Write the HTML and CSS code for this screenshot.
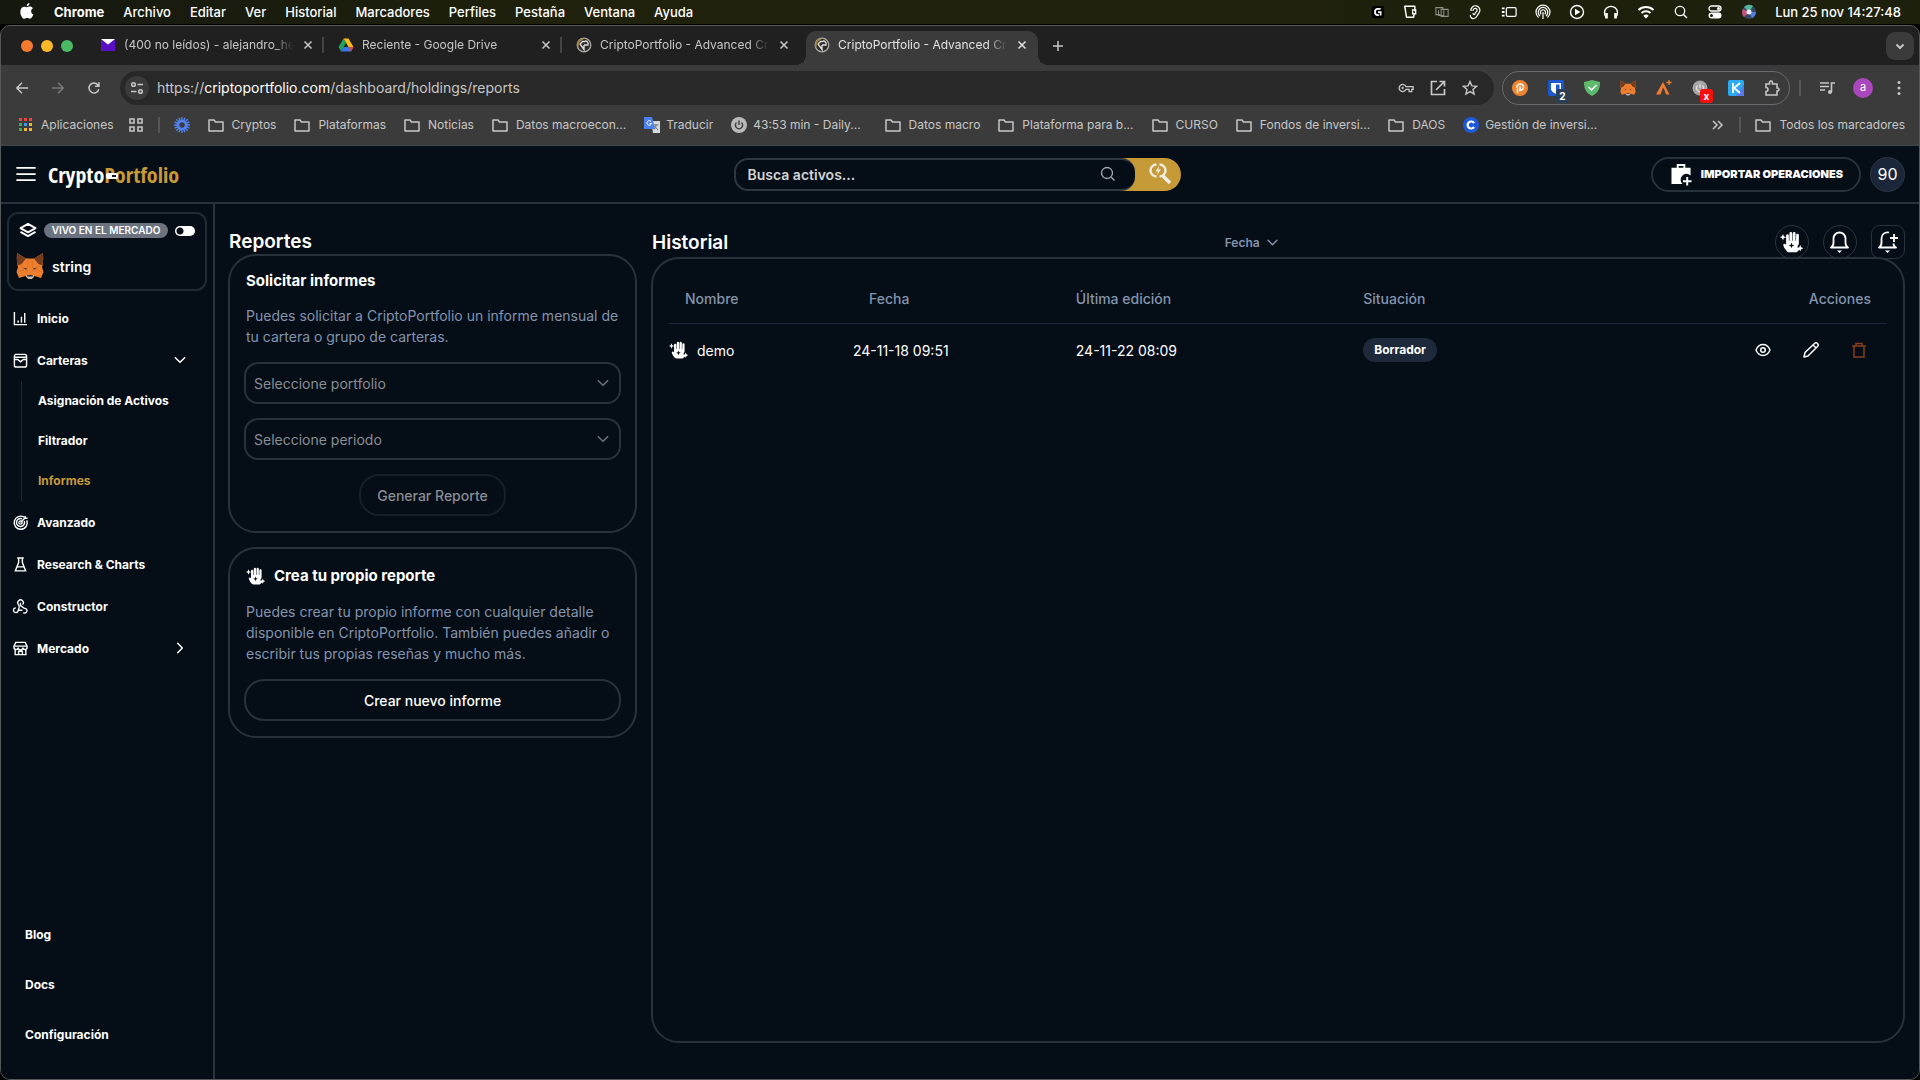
FILE: index.html
```html
<!DOCTYPE html>
<html lang="es">
<head>
<meta charset="utf-8">
<meta name="viewport" content="width=device-width, initial-scale=1">
<title>CriptoPortfolio - Advanced Crypto Dashboard</title>
<link rel="stylesheet" href="styles.css">
</head>
<body>
<svg class="defs" aria-hidden="true">
  <symbol id="folder" viewBox="0 0 16 16"><path d="M1 3h5l1.500 2H15v9H1z" fill="none" stroke="currentColor" stroke-width="1.500" stroke-linejoin="round"/></symbol>
  <symbol id="cross" viewBox="0 0 10 10"><path d="M1.500 1.500l7 7M8.500 1.500l-7 7" fill="none" stroke="currentColor" stroke-width="1.500"/></symbol>
  <symbol id="chev" viewBox="0 0 12 12"><path d="M2 4l4 4 4-4" fill="none" stroke="currentColor" stroke-width="1.300" stroke-linecap="round" stroke-linejoin="round"/></symbol>
  <symbol id="coin" viewBox="0 0 16 16"><circle cx="8" cy="8" r="6.800" fill="#2b2b2b" stroke="#aaa9a3" stroke-width="1.300"/><path d="M2 10A6.500 6.500 0 0 1 7 2" fill="none" stroke="#a9803a" stroke-width="1.500"/><path d="M9 4.500H6.500L4 7l4 5.500V8M8 8h4a3 3 0 0 0-3-4" fill="none" stroke="#deddd8" stroke-width="1.400"/></symbol>
  <symbol id="fox" viewBox="0 0 28 26"><path d="M1 0l9 5.500h8L27 0v11l-1 3 1.500 5-2.500 6-6.500-2-1.500 2h-6l-1.500-2L3 25l-2.500-6L2 14l-1-3z" fill="#ed7f2e"/><path d="M1 0l9 5.500L5.500 11 1.500 12.500 0.500 5zM27 0l-9 5.500 4.500 5.500 4 1.500 1-7.500z" fill="#763c1e"/><path d="M9.500 22.500h9l-2.500 3.500h-4z" fill="#cbbdb1"/><path d="M11.500 22h5l.5 1.500h-6zM7 14.500l4 1-1 1.200zM21 14.500l-4 1 1 1.200z" fill="#2b3040"/><path d="M5 12l3 5-6 2M23 12l-3 5 6 2M12 7l-1 12M16 7l1 12" fill="none" stroke="#d96d22" stroke-width=".7"/></symbol>
  <symbol id="hand" viewBox="0 0 20 18"><path d="M5.300 3.500a1.200 1.200 0 0 1 2.400 0V8h.5V1.500a1.200 1.200 0 0 1 2.400 0V8h.5V1.500a1.200 1.200 0 0 1 2.400 0V8h.5V3a1.200 1.200 0 0 1 2.400 0V10.500l-1.400 3 2.500 1.500L14.500 18H8c-2 0-4.500-4-5-5.800-.5-1.800 1-2.400 2.300-.9zM2.600 2l.8 2 2 .8-2 .8-.8 2-.8-2-2-.8 2-.8zM17.600 11.500l.8 2.100 2.100.8-2.100.8-.8 2.100-.8-2.100-2.100-.8 2.100-.8z" fill="currentColor"/><path d="M10 9.500l.7 1.800 1.800.7-1.800.7-.7 1.800-.7-1.800L7.500 12l1.800-.7z" fill="#050d17"/></symbol>
</svg>

<header class="menubar">
  <svg class="apple" viewBox="0 0 14 17"><path d="M9.500 0c.1 1.500-1.200 3.200-2.800 3.200C6.500 1.700 8 .2 9.500 0zM7 4.300c.8 0 1.500-.7 2.900-.7 1.200 0 2.300.6 3 1.600-2.600 1.500-2.200 5.100.5 6.200-.6 1.600-2 4.300-3.600 4.300-1 0-1.400-.7-2.700-.7s-1.700.7-2.700.7C2.400 15.700.3 12 .3 8.900c0-3.300 2-5.200 4-5.200 1.200 0 2 .6 2.700.6z" fill="#fff"/></svg>
  <nav class="menus" aria-label="Menú de la aplicación"><b>Chrome</b><span>Archivo</span><span>Editar</span><span>Ver</span><span>Historial</span><span>Marcadores</span><span>Perfiles</span><span>Pestaña</span><span>Ventana</span><span>Ayuda</span></nav>
  <div class="tray">
    <svg class="slim" viewBox="0 0 16 16"><rect x="1" y="1" width="14" height="14" rx="3" fill="#000"/><path d="M11 4.500H8a3.300 3.300 0 0 0 0 7h1M8 8h3v4" fill="none" stroke="#fff" stroke-width="2"/></svg>
    <svg class="slim" viewBox="0 0 16 16"><path d="M13.500 7V1.500H2l2 12.500h8l.8-3.500" fill="none" stroke="#fff" stroke-width="1.700" stroke-linejoin="round"/><path d="M11 5.500h3.500v4.500H11z" fill="none" stroke="#fff" stroke-width="1.500"/></svg>
    <svg class="slim dim" viewBox="0 0 16 16"><path d="M6 11H1V3h8v2M7 5h8v8H7zM4 6v6h6V6" fill="none" stroke="currentColor" stroke-width="1.200"/></svg>
    <svg viewBox="0 0 16 16"><path d="M4 7a4.500 4.500 0 1 1 8 2c-2 2-2 5-5 5.500C4 15 3 12 3.500 11M6 7c0-4 5-3 4 0-.4 1-2 1-2 2.500S6 11 6 9" fill="none" stroke="#fff" stroke-width="1.200"/></svg>
    <svg viewBox="0 0 18 16"><rect x="6" y="3" width="11" height="10" rx="1.500" fill="none" stroke="#fff" stroke-width="1.400"/><path d="M1 4h3M1 8h3M1 12h3" stroke="#fff" stroke-width="2"/></svg>
    <svg viewBox="0 0 16 16"><path d="M3.500 13.500a7 7 0 1 1 9 0M5 12a4.800 4.800 0 1 1 6 0M6.300 10.300a2.600 2.600 0 1 1 3.400 0M8 8v7" fill="none" stroke="#fff" stroke-width="1.200"/></svg>
    <svg viewBox="0 0 16 16"><circle cx="8" cy="8" r="6.500" fill="none" stroke="#fff" stroke-width="1.400"/><path d="M6 4.800L11.300 8 6 11.200z" fill="#fff"/></svg>
    <svg viewBox="0 0 16 16"><path d="M3 13a6.500 6.500 0 1 1 10 0" fill="none" stroke="#fff" stroke-width="1.400"/><path d="M3.500 9v5.500M12.500 9v5.500" stroke="#fff" stroke-width="2.600"/></svg>
    <svg class="wide" viewBox="0 0 18 16"><path d="M1.500 6a11 11 0 0 1 15 0M4.500 9a6.700 6.700 0 0 1 9 0" fill="none" stroke="#fff" stroke-width="2"/><path d="M9 14.500L6.300 11.700a4 4 0 0 1 5.400 0z" fill="#fff"/></svg>
    <svg viewBox="0 0 16 16"><circle cx="7" cy="7" r="4.700" fill="none" stroke="#fff" stroke-width="1.300"/><path d="M10.500 10.500L14 14" stroke="#fff" stroke-width="1.500"/></svg>
    <svg viewBox="0 0 16 16"><rect x="2" y="2" width="12" height="5" rx="2.500" fill="none" stroke="#fff" stroke-width="1.300"/><rect x="1.500" y="8.500" width="13" height="6" rx="3" fill="#fff"/><circle cx="11.500" cy="4.500" r="1.500" fill="#fff"/><circle cx="4.500" cy="11.500" r="1.500" fill="#1d1f0c"/></svg>
    <svg viewBox="0 0 16 16"><circle cx="8" cy="8" r="7" fill="#37475e"/><path d="M8 8L3 3a7 7 0 0 1 9-1z" fill="#52b6a0"/><path d="M8 8L3 13a7 7 0 0 1-1-8z" fill="#c8557b"/><path d="M8 8l3 6a7 7 0 0 0 4-6z" fill="#4f7fe0"/><circle cx="8" cy="8" r="2.500" fill="#e8ecf5"/></svg>
    <time>Lun 25 nov 14:27:48</time>
  </div>
</header>

<div class="window">
  <div class="tabstrip">
    <div class="lights"><i class="l1"></i><i class="l2"></i><i class="l3"></i></div>
    <div class="tab"><svg viewBox="0 0 16 16"><path d="M1 2h14v12H1z" fill="#5b0fc4"/><path d="M1 2h14L8 7.500z" fill="#fff"/></svg><span>(400 no leídos) - alejandro_he</span><button aria-label="Cerrar"><svg><use href="#cross"/></svg></button></div>
    <div class="tab"><svg viewBox="0 0 16 16"><path d="M5.500 1.500L0.500 10 3 14.500 8 6z" fill="#23a05a"/><path d="M5.500 1.500h5L15.500 10h-5z" fill="#f9bd1c"/><path d="M3 14.500h10l2.500-4.500h-10z" fill="#3b74e8"/><path d="M11 10h4.500L13 14.500z" fill="#e2422f"/></svg><span>Reciente - Google Drive</span><button aria-label="Cerrar"><svg><use href="#cross"/></svg></button></div>
    <div class="tab last"><svg><use href="#coin"/></svg><span>CriptoPortfolio - Advanced Cr</span><button aria-label="Cerrar"><svg><use href="#cross"/></svg></button></div>
    <div class="tab active"><svg><use href="#coin"/></svg><span>CriptoPortfolio - Advanced Cr</span><button aria-label="Cerrar"><svg><use href="#cross"/></svg></button></div>
    <button class="newtab" aria-label="Nueva pestaña"><svg viewBox="0 0 12 12"><path d="M6 1v10M1 6h10" stroke="currentColor" stroke-width="1.500"/></svg></button>
    <button class="tabsearch" aria-label="Buscar pestañas"><svg viewBox="0 0 12 12"><path d="M2.500 4.500L6 8l3.500-3.500" fill="none" stroke="currentColor" stroke-width="2"/></svg></button>
  </div>

  <div class="toolbar">
    <button aria-label="Atrás"><svg viewBox="0 0 16 16"><path d="M15 8H2M8 2L2 8l6 6" fill="none" stroke="currentColor" stroke-width="1.700"/></svg></button>
    <button class="off" aria-label="Adelante"><svg viewBox="0 0 16 16"><path d="M1 8h13M8 2l6 6-6 6" fill="none" stroke="currentColor" stroke-width="1.700"/></svg></button>
    <button aria-label="Recargar"><svg viewBox="0 0 16 16"><path d="M13.500 9.500A5.700 5.700 0 1 1 12.500 4.500L13.500 6M13.700 1.500V6H9.200" fill="none" stroke="currentColor" stroke-width="1.700"/></svg></button>
    <div class="omnibox">
      <span class="site"><svg viewBox="0 0 16 16"><path d="M8.500 4.500H14M2 11.500h5.500" stroke="currentColor" stroke-width="1.700"/><circle cx="4.500" cy="4.500" r="1.800" fill="none" stroke="currentColor" stroke-width="1.500"/><circle cx="11.500" cy="11.500" r="1.800" fill="none" stroke="currentColor" stroke-width="1.500"/></svg></span>
      <div class="url">https://<b>criptoportfolio.com</b>/dashboard/holdings/reports</div>
      <svg viewBox="0 0 18 16"><path d="M9 6.500h8v3h-1.500V12h-3V9.500H9A4 4 0 1 1 9 6.500z" fill="none" stroke="currentColor" stroke-width="1.500"/><circle cx="5.200" cy="8" r="1.300" fill="currentColor"/></svg>
      <svg viewBox="0 0 16 16"><path d="M7 1.500H1.500v13h13V9M9.500 1.500h5v5M14.500 1.500L6 10" fill="none" stroke="currentColor" stroke-width="1.700"/></svg>
      <svg viewBox="0 0 16 16"><path d="M8 1.500l1.900 4.400 4.700.4-3.600 3.100 1.100 4.700L8 11.600l-4.100 2.500L5 9.400 1.400 6.300l4.700-.4z" fill="none" stroke="currentColor" stroke-width="1.400"/></svg>
    </div>
    <div class="extensions">
      <svg viewBox="0 0 16 16"><circle cx="8" cy="8" r="8" fill="#f08531"/><path d="M5.500 13V8.500M5 8a3.300 3.300 0 1 1 3 2.500L8 6" fill="none" stroke="#fff" stroke-width="1.500"/></svg>
      <span class="ext"><svg viewBox="0 0 16 16"><rect width="16" height="16" rx="2" fill="#1b57d0"/><path d="M3 3h10v6c0 2-3 4-5 5-2-1-5-3-5-5z" fill="#fff"/><path d="M8 4.500h3.500V9c0 1-2 2.500-3.500 3.300z" fill="#1b57d0"/></svg><em class="badge-count">2</em></span>
      <svg viewBox="0 0 16 16"><path d="M8 0l8 2c0 7-2 11-8 14C2 13 0 9 0 2z" fill="#5dba6c"/><path d="M4.500 7L7.500 10l5-5" fill="none" stroke="#fff" stroke-width="1.500"/></svg>
      <svg><use href="#fox"/></svg>
      <svg viewBox="0 0 16 16"><path d="M7 2l6.500 12.500H10L8.500 10 7 7.500 4.500 14.500H0z" fill="#ef7d2d"/><path d="M13 0v5M10.500 2.500h5" stroke="#ef7d2d" stroke-width="1.300"/></svg>
      <span class="ext"><svg viewBox="0 0 16 16"><circle cx="8" cy="8" r="7.500" fill="#a5a5a5"/><path d="M5.500 5.500a3.600 3.600 0 1 0 5 0M8 3.500V8" fill="none" stroke="#ddd" stroke-width="1.300"/></svg><em class="badge-count red">x</em></span>
      <svg viewBox="0 0 16 16"><rect width="16" height="16" rx="2" fill="#2eaaf0"/><path d="M8 16h8V4z" fill="#5578ee"/><path d="M5 3v10M12 3L6 8l6 5" fill="none" stroke="#fff" stroke-width="1.800"/></svg>
      <svg viewBox="0 0 16 16"><path d="M2 4h3.500V2.500a1.500 1.500 0 0 1 3 0V4H13v4h.5a1.500 1.500 0 0 1 0 3H13v4H2v-3.500a2 2 0 0 0 0-4z" fill="none" stroke="currentColor" stroke-width="1.600"/></svg>
    </div>
    <i class="vsep"></i>
    <svg class="media" viewBox="0 0 16 16"><path d="M1 3h9M1 6.500h9M1 10h5M12.500 12V3H16" fill="none" stroke="currentColor" stroke-width="1.600"/><circle cx="11" cy="12" r="2" fill="currentColor"/></svg>
    <span class="profile">a</span>
    <svg class="dots" viewBox="0 0 16 16"><circle cx="8" cy="2.500" r="1.500" fill="currentColor"/><circle cx="8" cy="8" r="1.500" fill="currentColor"/><circle cx="8" cy="13.500" r="1.500" fill="currentColor"/></svg>
  </div>

  <nav class="bookmarks" aria-label="Marcadores">
    <div class="group">
      <a href="#"><svg viewBox="0 0 16 16"><path d="M2 1h3v3H2zM7 1h3v3H7zM12 1h3v3h-3z" fill="#f0453a"/><path d="M2 6h3v3H2zM2 11h3v3H2z" fill="#3fae5a"/><path d="M7 6h3v3H7z" fill="#3b97f0"/><path d="M12 6h3v3h-3zM7 11h3v3H7zM12 11h3v3h-3z" fill="#f5b52c"/></svg>Aplicaciones</a>
      <svg viewBox="0 0 16 16"><path d="M2 2h4v4H2zM10 2h4v4h-4zM2 10h4v4H2zM10 10h4v4h-4z" fill="none" stroke="currentColor" stroke-width="1.600"/></svg>
      <i class="vsep"></i>
      <svg viewBox="0 0 16 16"><circle cx="8" cy="8" r="4" fill="none" stroke="#5382f0" stroke-width="2.500"/><path d="M8 0v4M8 12v4M0 8h4M12 8h4M2.300 2.300l3 3M10.700 10.700l3 3M13.700 2.300l-3 3M5.300 10.700l-3 3M5 .7l1.500 3.600M9.500 11.700l1.500 3.600M.7 11l3.600-1.500M11.700 6.500L15.300 5M11 .7L9.500 4.300M6.500 11.700L5 15.300M.7 5l3.600 1.500M11.700 9.500l3.600 1.500" stroke="#5382f0" stroke-width="1.400"/></svg>
    </div>
    <a href="#"><svg><use href="#folder"/></svg>Cryptos</a>
    <a href="#"><svg><use href="#folder"/></svg>Plataformas</a>
    <a href="#"><svg><use href="#folder"/></svg>Noticias</a>
    <a href="#"><svg><use href="#folder"/></svg>Datos macroecon...</a>
    <a href="#" class="fav"><svg viewBox="0 0 16 16"><path d="M7 4h9v12H9z" fill="#d5d8dc"/><path d="M0 0h8l3 12H0z" fill="#4c80ee"/><path d="M7 4.500a2.300 2.300 0 1 0 .5 2H5.500" fill="none" stroke="#fff"/><path d="M9.500 8h5M12 7v1c0 2-1 3.500-2 4.500M10.500 9l3.500 4" stroke="#677" fill="none"/></svg>Traducir</a>
    <a href="#" class="fav"><svg viewBox="0 0 16 16"><circle cx="8" cy="8" r="8" fill="#b9b9b9"/><path d="M5.500 5.500a3.600 3.600 0 1 0 5 0M8 3.500V8" fill="none" stroke="#3b3b3b" stroke-width="1.400"/></svg>43:53 min - Daily...</a>
    <a href="#" class="gap"><svg><use href="#folder"/></svg>Datos macro</a>
    <a href="#"><svg><use href="#folder"/></svg>Plataforma para b...</a>
    <a href="#"><svg><use href="#folder"/></svg>CURSO</a>
    <a href="#"><svg><use href="#folder"/></svg>Fondos de inversi...</a>
    <a href="#"><svg><use href="#folder"/></svg>DAOS</a>
    <a href="#" class="fav"><svg viewBox="0 0 16 16"><circle cx="8" cy="8" r="8" fill="#1f5ad6"/><path d="M11 6a3.500 3.500 0 1 0 0 4" fill="none" stroke="#fff" stroke-width="2.200"/></svg>Gestión de inversi...</a>
    <div class="group end">
      <svg viewBox="0 0 16 16"><path d="M4 4l4 4-4 4M9 4l4 4-4 4" fill="none" stroke="currentColor" stroke-width="1.500"/></svg>
      <i class="vsep"></i>
      <a href="#"><svg><use href="#folder"/></svg>Todos los marcadores</a>
    </div>
  </nav>

  <div class="app">
    <header class="topbar">
      <div class="brand">
        <button class="burger" aria-label="Menú"><svg viewBox="0 0 22 16"><path d="M0 1h22M0 8h22M0 15h22" stroke="currentColor" stroke-width="2"/></svg></button>
        <a class="logo" href="#">Crypto<span>Portfolio<svg viewBox="0 0 12 6"><rect width="12" height="6" rx="2" fill="#fff"/><path d="M6 2h4v2H6z" fill="#111a24"/></svg></span></a>
      </div>
      <form class="search">
        <label class="field"><input type="text" placeholder="Busca activos..." aria-label="Busca activos"><svg viewBox="0 0 16 16"><circle cx="7" cy="7" r="5.500" fill="none" stroke="currentColor" stroke-width="1.300"/><path d="M11.300 11.300L14.500 14.500" stroke="currentColor" stroke-width="1.300"/></svg></label>
        <button type="button" aria-label="Búsqueda avanzada"><svg viewBox="0 0 22 22"><path d="M6.500 1.500a6 6 0 0 0 0 12M9.500 1.500a6 6 0 0 1 0 12" fill="none" stroke="currentColor" stroke-width="2.400"/><path d="M9 3L5.500 8.500H8L7 12l4-5.500H8.500z" fill="currentColor"/><path d="M12.500 12.500L20 20" stroke="currentColor" stroke-width="3.500"/></svg></button>
      </form>
      <div class="actions">
        <button class="import"><svg viewBox="0 0 22 24"><path d="M6 5V1h9v4h5.500v8A6 6 0 0 0 12 22H0.500V5zM8 5h5V3H8z" fill="currentColor" fill-rule="evenodd"/><path d="M17 14.500v9M12.500 19h9" stroke="currentColor" stroke-width="2"/></svg>IMPORTAR OPERACIONES</button>
        <span class="score">90</span>
      </div>
    </header>

    <div class="body">
      <aside class="sidebar">
        <section class="wallet">
          <div class="live"><svg viewBox="0 0 18 16"><path d="M9 1l8 4.500L9 10 1 5.500zM1 9.500L9 14l8-4.500" fill="none" stroke="currentColor" stroke-width="2" stroke-linejoin="round"/></svg><span>VIVO EN EL MERCADO</span><input type="checkbox" aria-label="Vivo en el mercado"></div>
          <div class="account"><svg><use href="#fox"/></svg>string</div>
        </section>
        <nav class="nav">
          <a href="#"><svg viewBox="0 0 16 16"><path d="M1.500 1v13.500H15M5.500 10v2.500M9 6v6.500M12.500 2v10.500" fill="none" stroke="currentColor" stroke-width="1.500"/></svg>Inicio</a>
          <a href="#"><svg viewBox="0 0 16 16"><rect x="1.500" y="1.500" width="13" height="13.500" rx="2" fill="none" stroke="currentColor" stroke-width="1.500"/><path d="M1.500 4.500h13M1.500 7h3.500l3 2.500L11 7h3.500" fill="none" stroke="currentColor" stroke-width="1.500"/></svg>Carteras<svg class="arrow"><use href="#chev"/></svg></a>
          <div class="sub"><a href="#">Asignación de Activos</a><a href="#">Filtrador</a><a href="#" class="on">Informes</a></div>
          <a href="#"><svg viewBox="0 0 16 16"><path d="M14.700 5.500A7 7 0 1 1 12 2.300M12 6.500A4.300 4.300 0 1 1 9.500 4M8 8l5.500-5.500M13 1v2.500H15.500" fill="none" stroke="currentColor" stroke-width="1.500"/><circle cx="8" cy="8" r="1.800" fill="none" stroke="currentColor" stroke-width="1.300"/></svg>Avanzado</a>
          <a href="#"><svg viewBox="0 0 16 16"><path d="M4.500 1h7M6 1v5L2.500 14.800h11L10 6V1M4.500 10.500h7" fill="none" stroke="currentColor" stroke-width="1.500"/></svg>Research &amp; Charts</a>
          <a href="#"><svg viewBox="0 0 16 16"><path d="M5.800 6A3 3 0 1 1 10.300 6M5.800 6C7.500 8 6.500 10 5.500 12A2.500 2.500 0 1 1 3 9.500M8 4v3l4 3a2.500 2.500 0 1 1-1 4.500M6 12h4" fill="none" stroke="currentColor" stroke-width="1.400"/></svg>Constructor</a>
          <a href="#"><svg viewBox="0 0 16 16"><path d="M3 1.500h10l2 4v1a2 2 0 0 1-4.500.5 2.500 2.500 0 0 1-5 0A2 2 0 0 1 1 6.500v-1zM1 5.500h14M2.300 8.500v6h11.400v-6M6 14.500V11h4v3.500" fill="none" stroke="currentColor" stroke-width="1.500"/></svg>Mercado<svg class="arrow right"><use href="#chev"/></svg></a>
        </nav>
        <nav class="links"><a href="#">Blog</a><a href="#">Docs</a><a href="#">Configuración</a></nav>
      </aside>

      <main class="main">
        <section class="reports">
          <h1>Reportes</h1>
          <form class="card">
            <h2>Solicitar informes</h2>
            <p>Puedes solicitar a CriptoPortfolio un informe mensual de tu cartera o grupo de carteras.</p>
            <div class="select"><select aria-label="Portfolio"><option>Seleccione portfolio</option></select><svg><use href="#chev"/></svg></div>
            <div class="select"><select aria-label="Periodo"><option>Seleccione periodo</option></select><svg><use href="#chev"/></svg></div>
            <button type="button" class="generate" disabled>Generar Reporte</button>
          </form>
          <div class="card">
            <h2 class="with-icon"><svg><use href="#hand"/></svg>Crea tu propio reporte</h2>
            <p>Puedes crear tu propio informe con cualquier detalle disponible en CriptoPortfolio. También puedes añadir o escribir tus propias reseñas y mucho más.</p>
            <button type="button" class="create">Crear nuevo informe</button>
          </div>
        </section>

        <section class="history">
          <div class="history-head">
            <h1>Historial</h1>
            <button class="sort">Fecha<svg><use href="#chev"/></svg></button>
            <div class="round">
              <button aria-label="Crear informe"><svg><use href="#hand"/></svg></button>
              <button aria-label="Alertas"><svg viewBox="0 0 22 22"><path d="M2.500 16.500c2-1 2.500-2.500 2.500-5V7.500a6 6 0 0 1 12 0v4c0 2.500.5 4 2.500 5z" fill="none" stroke="currentColor" stroke-width="1.800" stroke-linejoin="round"/><path d="M8.500 19.500h5L11 22z" fill="currentColor"/></svg></button>
              <button class="square" aria-label="Nueva alerta"><svg viewBox="0 0 22 22"><path d="M12.500 1.500A6 6 0 0 0 5 7.500v4c0 2.500-.5 4-2.500 5h17c-2-1-2.500-2.500-2.500-4M17.500 3v8M13.500 7h8" fill="none" stroke="currentColor" stroke-width="1.800" stroke-linejoin="round"/><path d="M8.500 19.500h5L11 22z" fill="currentColor"/></svg></button>
            </div>
          </div>
          <div class="card table-card">
            <table>
              <thead><tr><th class="c1 pad">Nombre</th><th class="c2 pad">Fecha</th><th class="c3">Última edición</th><th class="c4">Situación</th><th class="c5 pad">Acciones</th></tr></thead>
              <tbody><tr>
                <td><span class="name"><svg><use href="#hand"/></svg>demo</span></td>
                <td>24-11-18 09:51</td>
                <td>24-11-22 08:09</td>
                <td><span class="status">Borrador</span></td>
                <td><div class="row-actions">
                  <button aria-label="Ver"><svg viewBox="0 0 16 16"><path d="M1 8c3-7.300 11-7.300 14 0-3 7.300-11 7.300-14 0z" fill="none" stroke="currentColor" stroke-width="1.400"/><circle cx="8" cy="8" r="2.300" fill="none" stroke="currentColor" stroke-width="1.500"/></svg></button>
                  <button aria-label="Editar"><svg viewBox="0 0 16 16"><path d="M1 15l1-4.500L11.500 1.500a2 2 0 0 1 3 3L5 14zM10 3l3 3" fill="none" stroke="currentColor" stroke-width="1.500" stroke-linejoin="round"/></svg></button>
                  <button class="trash" aria-label="Eliminar"><svg viewBox="0 0 16 16"><path d="M1 4h14M5 4V1.500h6V4M3 4v11h10V4" fill="none" stroke="currentColor" stroke-width="1.500"/></svg></button>
                </div></td>
              </tr></tbody>
            </table>
          </div>
        </section>
      </main>
    </div>
  </div>
</div>
</body>
</html>
```

FILE: styles.css
```css
:root {
  --bg: #050d17;
  --line: #28323d;
  --muted: #8494ad;
  --gold: #c79a38;
}
* { box-sizing: border-box; }
body {
  margin: 0;
  min-height: 100vh;
  display: flex;
  flex-direction: column;
  background: #000;
  color: #fff;
  font-family: Inter, "Liberation Sans", sans-serif;
  font-size: 14px;
}
button, input, select { font: inherit; color: inherit; background: none; border: 0; padding: 0; margin: 0; }
a { color: inherit; text-decoration: none; }
h1, h2, p { margin: 0; }
svg { display: block; flex: none; width: 16px; height: 16px; overflow: visible; }
.defs { position: absolute; width: 0; height: 0; }

/* System menu bar */
.menubar {
  display: flex;
  align-items: center;
  height: 24px;
  padding: 0 19px 1px 20px;
  background: linear-gradient(90deg, #15180f, #1f210c 30%, #1d200c);
  font-size: 13px;
  font-weight: 500;
}
.apple { width: 14px; height: 17px; }
.menus { display: flex; gap: 19px; margin-left: 20px; }
.menus b { font-weight: 700; }
.tray { display: flex; align-items: center; gap: 18px; margin-left: auto; }
.tray .slim { width: 14px; }
.tray .wide { width: 18px; }
.tray .dim { color: #8e8f86; }

/* Browser window */
.window {
  flex: 1;
  display: flex;
  flex-direction: column;
  margin-top: 1px;
  overflow: hidden;
  border: 1px solid #55585a;
  border-radius: 10px;
  background: #202020;
  color: #c7c7c7;
}
.tabstrip {
  display: flex;
  align-items: center;
  height: 39px;
  padding: 0 5px 0 20px;
  font-size: 12px;
}
.lights { display: flex; gap: 8px; margin-right: 19px; }
.lights i { width: 12px; height: 12px; border-radius: 50%; }
.l1 { background: #f5792f; }
.l2 { background: #fdb827; }
.l3 { background: #49b964; }
.tab {
  position: relative;
  display: flex;
  align-items: center;
  gap: 8px;
  width: 238px;
  height: 34px;
  margin-top: 5px;
  padding: 0 15px 7px 8px;
}
.tab > span {
  flex: 1;
  overflow: hidden;
  white-space: nowrap;
  -webkit-mask-image: linear-gradient(90deg, #000 88%, transparent);
  mask-image: linear-gradient(90deg, #000 88%, transparent);
}
.tab button { width: 14px; display: grid; place-items: center; }
.tab button svg { width: 10px; height: 10px; }
.tab:not(.last):not(.active)::after {
  content: "";
  position: absolute;
  right: 6px;
  top: 6px;
  width: 2px;
  height: 16px;
  background: #444;
}
.tab.active { width: 232px; padding-right: 9px; background: #3b3b3b; border-radius: 10px 10px 0 0; color: #e3e3e3; }
.tab.active::before, .tab.active::after {
  content: "";
  position: absolute;
  bottom: 0;
  width: 10px;
  height: 10px;
}
.tab.active::before { right: 100%; background: radial-gradient(circle at 0 0, transparent 10px, #3b3b3b 10px); }
.tab.active::after { left: 100%; background: radial-gradient(circle at 100% 0, transparent 10px, #3b3b3b 10px); }
.newtab { margin-left: 14px; }
.newtab svg, .tabsearch svg { width: 12px; height: 12px; }
.tabsearch {
  display: grid;
  place-items: center;
  width: 28px;
  height: 28px;
  margin-left: auto;
  border-radius: 9px;
  background: #3b3b3b;
}
.toolbar {
  display: flex;
  align-items: center;
  height: 45px;
  padding: 0 12px 0 3px;
  background: #3b3b3b;
}
.toolbar > button { display: grid; place-items: center; width: 36px; }
.toolbar > button svg { width: 14px; height: 14px; }
.toolbar .off { color: #7a7a7a; }
.omnibox {
  flex: 1;
  display: flex;
  align-items: center;
  gap: 16px;
  height: 34px;
  margin-left: 8px;
  padding: 0 16px 0 5px;
  border-radius: 17px;
  background: #282828;
}
.site { display: grid; place-items: center; width: 24px; height: 24px; border-radius: 50%; background: #3b3b3b; }
.url { flex: 1; margin-left: -8px; }
.url b { font-weight: 400; color: #fff; }
.extensions {
  display: flex;
  align-items: center;
  gap: 20px;
  height: 34px;
  margin-left: 8px;
  padding: 0 9px;
  border: 1px solid #686a70;
  border-radius: 17px;
}
.ext { position: relative; }
.badge-count {
  position: absolute;
  left: 8px;
  top: 9px;
  width: 13px;
  height: 14px;
  border-radius: 3px;
  background: #2b4054;
  color: #fff;
  font: 700 10px/14px Inter, sans-serif;
  text-align: center;
}
.badge-count.red { background: #fb0d0d; }
.vsep { width: 2px; height: 16px; background: #56575a; }
.toolbar .vsep { margin: 0 18px 0 9px; }
.profile {
  width: 20px;
  height: 20px;
  margin: 0 18px 0 18px;
  border-radius: 50%;
  background: #ab47bc;
  color: #fff;
  font-size: 11px;
  line-height: 19px;
  text-align: center;
}
.bookmarks {
  display: flex;
  align-items: center;
  gap: 18px;
  height: 35px;
  padding: 0 14px 6px 16px;
  background: #3b3b3b;
  font-size: 12px;
  white-space: nowrap;
}
.bookmarks a { display: flex; align-items: center; gap: 8px; }
.bookmarks .fav { gap: 6px; }
.bookmarks .gap { margin-left: 6px; }
.group { display: flex; align-items: center; gap: 14px; }
.group.end { margin-left: auto; }

/* Application */
.app {
  flex: 1;
  display: flex;
  flex-direction: column;
  border-top: 1px solid #3d484e;
  background: var(--bg);
  color: #fff;
}
.topbar {
  display: grid;
  grid-template-columns: 1fr auto 1fr;
  align-items: center;
  height: 58px;
  padding: 0 14px;
  border-bottom: 2px solid var(--line);
}
.brand { display: flex; align-items: center; gap: 11px; }
.burger svg { width: 22px; height: 14px; }
.logo { font: 300 22px/28px "Open Sans Condensed", "Roboto Condensed", "Liberation Sans Narrow", Roboto, sans-serif; }
.logo span { position: relative; color: var(--gold); }
.logo svg { position: absolute; left: 2px; top: 14px; width: 12px; height: 6px; }
.search { display: flex; width: 447px; height: 33px; margin-right: 6px; border-radius: 17px; background: linear-gradient(90deg, transparent 50%, var(--gold) 50%); }
.field {
  flex: 1;
  display: flex;
  align-items: center;
  padding: 0 19px 0 12px;
  border: 2px solid #2d3742;
  border-right: 0;
  border-radius: 14px;
  background: var(--bg);
}
.field input { flex: 1; outline: 0; font-weight: 600; }
.field input::placeholder { color: #d3d3d3; opacity: 1; }
.field svg { color: #a7abaf; }
.search button { width: 46px; padding-left: 6px; display: grid; place-items: center; color: #f1ede4; }
.search button svg { width: 22px; height: 22px; }
.actions { display: flex; align-items: center; justify-content: flex-end; gap: 9px; }
.import {
  display: flex;
  align-items: center;
  gap: 9px;
  height: 35px;
  padding: 0 16px 0 18px;
  border: 2px solid var(--line);
  border-radius: 18px;
  font-size: 11px;
  font-weight: 900;
}
.import svg { width: 21px; height: 23px; }
.score {
  width: 35px;
  height: 35px;
  border: 1px solid #2d3742;
  border-radius: 50%;
  background: #1b263a;
  font-size: 16px;
  line-height: 33px;
  text-align: center;
}
.body { flex: 1; display: flex; }
.sidebar {
  display: flex;
  flex-direction: column;
  width: 214px;
  border-right: 2px solid var(--line);
  font-size: 12px;
  font-weight: 700;
}
.wallet {
  margin: 8px 6px 6px;
  height: 79px;
  padding: 9px 10px 0 7px;
  border: 2px solid #202a33;
  border-radius: 11px;
}
.live { display: flex; align-items: center; justify-content: space-between; }
.live svg { width: 18px; height: 15px; margin-left: 3px; }
.live span { padding: 0 8px; border-radius: 8px; background: #6b7280; font-size: 10px; font-weight: 600; line-height: 15px; }
.live input { appearance: none; width: 20px; height: 10px; border-radius: 5px; background: radial-gradient(circle at 5px 5px, var(--bg) 3px, #fff 4px); }
.account { display: flex; align-items: center; gap: 8px; margin-top: 15px; font-size: 14px; font-weight: 600; }
.account svg { width: 28px; height: 26px; }
.nav a { display: flex; align-items: center; gap: 9px; height: 42px; padding: 0 26px 0 12px; }
.nav svg { width: 15px; height: 15px; }
.nav .arrow { width: 14px; height: 14px; margin-left: auto; }
.nav .right { transform: rotate(-90deg); }
.nav .sub { margin-left: 20px; border-left: 1px solid #1d2834; }
.nav .sub a { height: 40px; padding: 0 0 1px 16px; }
.nav .on { color: var(--gold); }
.links { margin-top: auto; padding: 0 24px 20px; }
.links a { display: flex; align-items: center; height: 50px; }

.main { flex: 1; display: grid; grid-template-columns: 409px 1fr; gap: 14px; padding: 21px 14px 36px 13px; }
h1 { padding-left: 1px; font-size: 19px; line-height: 29px; font-weight: 600; }
.reports h1 { padding-top: 4px; line-height: 25px; }
.card { border: 2px solid var(--line); border-radius: 28px; }
.reports .card { display: flex; flex-direction: column; padding: 14px 14px 15px; margin-bottom: 14px; }
.card h2 { display: flex; align-items: center; gap: 9px; padding: 0 2px; font-size: 15px; line-height: 22px; font-weight: 700; }
.card h2.with-icon { line-height: 25px; }
.card h2 svg { width: 19px; height: 18px; }
.card p { margin: 13px 0 15px; padding: 0 2px; color: var(--muted); line-height: 21px; }
.select { position: relative; margin-bottom: 14px; }
.select select {
  appearance: none;
  display: block;
  width: 100%;
  height: 42px;
  padding: 0 8px;
  border: 2px solid var(--line);
  border-radius: 14px;
  color: #8b8e92;
}
.select svg { position: absolute; right: 11px; top: 14px; width: 14px; height: 14px; color: #6b7178; }
.generate, .create { height: 42px; border: 2px solid var(--line); border-radius: 20px; font-weight: 500; }
.generate { align-self: center; padding: 0 16px; border-color: #17202a; color: #8b8e92; }

.history { display: flex; flex-direction: column; }
.history-head { display: flex; align-items: center; justify-content: space-between; height: 34px; }
.sort { display: flex; align-items: center; gap: 6px; color: var(--muted); font-size: 12px; font-weight: 600; }
.sort svg { width: 13px; height: 13px; }
.round { display: flex; gap: 14px; }
.round button { display: grid; place-items: center; width: 34px; height: 34px; border: 1px solid #2a343e; border-radius: 50%; }
.round .square { border-radius: 9px; }
.round svg { width: 23px; height: 22px; }
.table-card { flex: 1; margin-top: -2px; padding: 15px 16px; }
table { width: 100%; border-collapse: collapse; table-layout: fixed; }
th { height: 49px; padding: 0; border-bottom: 1px solid #1e293b; color: var(--muted); font-weight: 500; text-align: left; }
th.pad { padding: 0 16px; }
.c1 { width: 15.1%; }
.c2 { width: 18.3%; }
.c3 { width: 23.6%; }
th.c5 { text-align: right; }
td { height: 54px; padding: 0; }
.name { display: flex; align-items: center; gap: 9px; }
.name svg { width: 19px; height: 18px; }
.status { display: inline-block; padding: 0 11px; border-radius: 12px; background: #1e293b; font-size: 12px; font-weight: 700; line-height: 24px; }
.row-actions { display: flex; justify-content: flex-end; gap: 32px; padding-right: 20px; }
.row-actions svg { width: 16px; height: 16px; }
.trash { color: #86401d; }
```
